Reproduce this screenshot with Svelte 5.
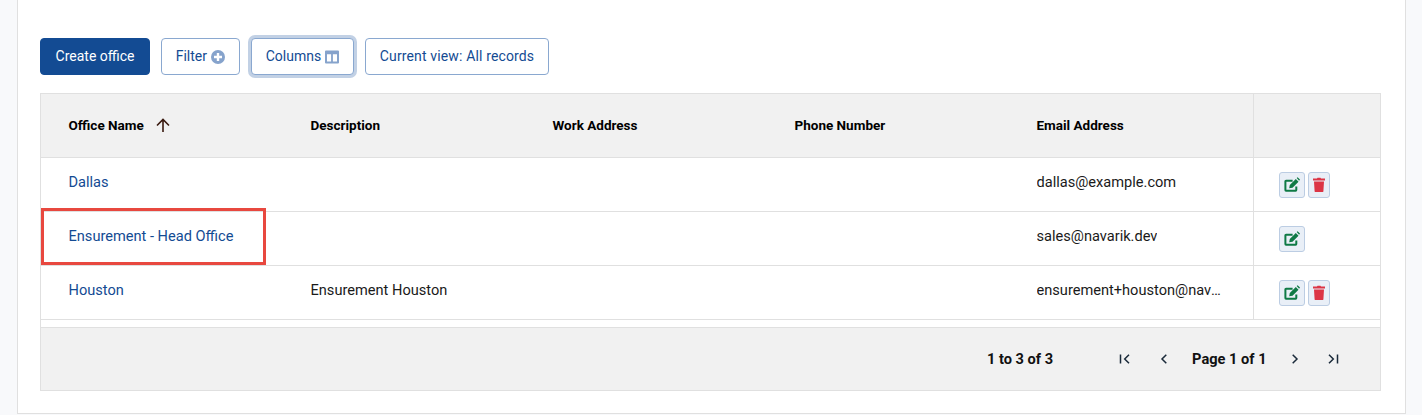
<script lang="ts">
  const columns = ["Office Name", "Description", "Work Address", "Phone Number", "Email Address"];

  const rows = [
    {name: "Dallas", description: "", email: "dallas@example.com", canDelete: true, flagged: false},
    {name: "Ensurement - Head Office", description: "", email: "sales@navarik.dev", canDelete: false, flagged: true},
    {name: "Houston", description: "Ensurement Houston", email: "ensurement+houston@navarik.dev", canDelete: true, flagged: false},
  ];
</script>

<main class="panel">
  <div class="toolbar">
    <button class="btn primary">Create office</button>
    <button class="btn">
      Filter
      <svg class="ico" viewBox="0 0 14 14" aria-hidden="true">
        <circle cx="7" cy="7" r="7" fill="#86a3cc" />
        <path d="M7 3v8M3 7h8" stroke="#fff" stroke-width="2.4" />
      </svg>
    </button>
    <button class="btn focused">
      Columns
      <svg class="ico" viewBox="0 0 14 14" aria-hidden="true">
        <path d="M1 .5h12a1 1 0 0 1 1 1v11a1 1 0 0 1-1 1H1a1 1 0 0 1-1-1v-11a1 1 0 0 1 1-1zM2 4.2v7.3h4.1V4.2zm5.9 0v7.3H12V4.2z" fill="#86a3cc" fill-rule="evenodd" />
      </svg>
    </button>
    <button class="btn spaced">Current view: All records</button>
  </div>

  <div class="grid-box">
    <div class="row head">
      {#each columns as col, i}
        <div class="cell">
          {col}
          {#if i === 0}
            <svg class="sort" viewBox="0 0 14 14" aria-hidden="true">
              <path d="M7 14V1.5M1 7.5l6-6 6 6" fill="none" stroke="#3a1a10" stroke-width="1.6" />
            </svg>
          {/if}
        </div>
      {/each}
      <div class="cell actions"></div>
    </div>

    {#each rows as row}
      <div class="row body">
        <div class="cell"><a href="#office" class="link">{row.name}</a></div>
        <div class="cell">{row.description}</div>
        <div class="cell"></div>
        <div class="cell"></div>
        <div class="cell"><span class="clip">{row.email}</span></div>
        <div class="cell actions">
          <button class="icon-btn edit" aria-label="Edit">
            <svg viewBox="0 0 16 16" aria-hidden="true">
              <path d="M12.3 9.4v3.7a.6.6 0 0 1-.6.6H2a.6.6 0 0 1-.6-.6V4.3a.6.6 0 0 1 .6-.6h6.6" fill="none" stroke="#0f7a45" stroke-width="2" />
              <path d="M5.2 11.2l.6-3.2 6-6 2.7 2.7-6 6zM12.7 1.1l.9-.9 2.4 2.4-.9 1.1z" fill="#0f7a45" />
            </svg>
          </button>
          {#if row.canDelete}
            <button class="icon-btn trash" aria-label="Delete">
              <svg viewBox="0 0 16 16" aria-hidden="true">
                <path d="M2 1.6h4l.5-.8h3l.5.8h4v1.8H2zM3 4.6h10l-.6 9.6a1 1 0 0 1-1 .9H4.6a1 1 0 0 1-1-.9z" fill="#dc3545" />
              </svg>
            </button>
          {/if}
        </div>
        {#if row.flagged}
          <span class="callout"></span>
        {/if}
      </div>
    {/each}

    <div class="spacer"></div>

    <footer class="pager">
      <span class="count">1 to 3 of 3</span>
      <div class="pages">
        <svg class="nav" viewBox="0 0 14 14" aria-hidden="true"><path d="M2.5 2.5v9M11 2.7 6.7 7l4.3 4.3" /></svg>
        <svg class="nav tight" viewBox="0 0 14 14" aria-hidden="true"><path d="M9.3 2.7 5 7l4.3 4.3" /></svg>
        <span class="page">Page 1 of 1</span>
        <svg class="nav next" viewBox="0 0 14 14" aria-hidden="true"><path d="M4.7 2.7 9 7l-4.3 4.3" /></svg>
        <svg class="nav" viewBox="0 0 14 14" aria-hidden="true"><path d="M3 2.7 7.3 7 3 11.3M11.5 2.5v9" /></svg>
      </div>
    </footer>
  </div>
</main>

<style>
  :global(body) {
    background: #f8f9fb;
    font-family: Roboto, "Liberation Sans", sans-serif;
    font-size: 14.6px;
    color: #1a1a1a;
  }
  .panel {
    box-sizing: border-box;
    width: 1389px;
    height: 414px;
    margin-left: 17px;
    padding: 38px 23px 0 22px;
    background: #fff;
    border: 1px solid #e0e0e0;
    border-top: none;
  }
  .toolbar {
    display: flex;
    gap: 10.7px;
    height: 37px;
    margin-bottom: 18px;
  }
  .btn {
    display: inline-flex;
    align-items: center;
    justify-content: center;
    gap: 4px;
    height: 37px;
    padding: 0 14px 2px;
    background: #fff;
    border: 1px solid #8aa8d0;
    border-radius: 4px;
    color: #134b93;
    font: inherit;
    font-size: 14px;
  }
  .spaced {
    letter-spacing: 0.14px;
  }
  .primary {
    width: 110px;
    background: #134b93;
    border-color: #134b93;
    color: #fff;
  }
  .focused {
    box-shadow: 0 0 0 3px #c2d1e5;
  }
  .ico {
    width: 14px;
    height: 14px;
    margin-top: 2px;
  }
  .grid-box {
    width: 1341px;
    box-sizing: border-box;
    border: 1px solid #e0e0e0;
  }
  .row {
    position: relative;
    display: grid;
    grid-template-columns: repeat(4, 242px) 244px 1fr;
    border-bottom: 1px solid #e0e0e0;
  }
  .head {
    height: 64px;
    background: #f1f1f1;
    font-weight: 700;
    font-size: 13.5px;
    color: #000;
    box-sizing: border-box;
  }
  .head .cell {
    padding-bottom: 2px;
  }
  .body {
    height: 54px;
    box-sizing: border-box;
  }
  .cell {
    display: flex;
    align-items: center;
    min-width: 0;
    padding: 0 27px 0 27.5px;
  }
  .body .cell {
    padding-bottom: 6px;
    padding-top: 1px;
  }
  .clip {
    overflow: hidden;
    white-space: nowrap;
    text-overflow: ellipsis;
  }
  .row .actions {
    gap: 3px;
    padding: 1px 0 0 25px;
    border-left: 1px solid #e0e0e0;
  }
  .sort {
    width: 14px;
    height: 14px;
    margin-left: 12px;
  }
  .link {
    color: #134b93;
    text-decoration: none;
  }
  .icon-btn {
    display: flex;
    align-items: center;
    justify-content: center;
    height: 26px;
    padding: 0;
    background: #e9eff7;
    border: 1px solid #bccde3;
    border-radius: 3px;
  }
  .icon-btn svg {
    width: 16px;
    height: 16px;
  }
  .edit {
    width: 26px;
  }
  .trash {
    width: 22px;
  }
  .callout {
    position: absolute;
    left: 0;
    top: -4px;
    width: 225px;
    height: 57px;
    box-sizing: border-box;
    border: 3px solid #e8483f;
  }
  .spacer {
    height: 7px;
    border-bottom: 1px solid #e0e0e0;
  }
  .pager {
    display: flex;
    align-items: center;
    height: 62px;
    padding-left: 946px;
    background: #f1f1f1;
    font-weight: 700;
    font-size: 14.6px;
    color: #111;
  }
  .pages {
    display: flex;
    align-items: center;
    margin-left: 65px;
  }
  .nav {
    width: 14px;
    height: 14px;
    margin-right: 25px;
    fill: none;
    stroke: #1a2a3a;
    stroke-width: 1.5;
  }
  .tight {
    margin-right: 21px;
  }
  .next {
    margin-right: 24px;
  }
  .page {
    margin-right: 21px;
  }
</style>
